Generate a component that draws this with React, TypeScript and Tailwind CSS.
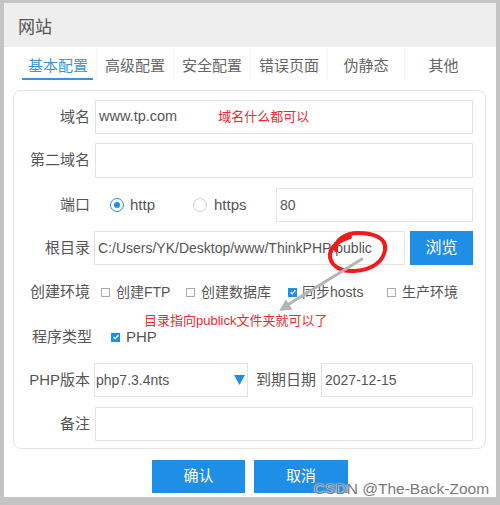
import React from "react";

const tabs = ["基本配置", "高级配置", "安全配置", "错误页面", "伪静态", "其他"];

function Label(props: { text: string; className?: string }) {
  return (
    <div className={["w-[76px] shrink-0 text-right text-[15px] text-[#555]", props.className].filter(Boolean).join(" ")}>
      {props.text}
    </div>
  );
}

function Field(props: { children?: React.ReactNode; className?: string }) {
  return (
    <div
      className={[
        "h-full flex items-center border border-[#e3e3e3] bg-white px-[3px] text-[14px] text-[#555]",
        props.className
      ]
        .filter(Boolean)
        .join(" ")}
    >
      {props.children}
    </div>
  );
}

function Radio(props: { checked?: boolean }) {
  return props.checked ? (
    <span className="flex h-[14px] w-[14px] items-center justify-center rounded-full border border-[#1e8ee6] bg-white">
      <span className="h-[6px] w-[6px] rounded-full bg-[#1e8ee6]" />
    </span>
  ) : (
    <span className="h-[14px] w-[14px] rounded-full border border-[#d0d0d0] bg-white" />
  );
}

function Check(props: { checked?: boolean }) {
  return props.checked ? (
    <span className="flex h-[9px] w-[9px] items-center justify-center bg-[#1e8ee6]">
      <svg viewBox="0 0 10 10" className="h-[8px] w-[8px]" fill="none" stroke="white" strokeWidth="1.8">
        <path d="M2 5.2l2 2 4-4.4" />
      </svg>
    </span>
  ) : (
    <span className="h-[9px] w-[9px] border border-[#aaa] bg-white" />
  );
}

export default function App() {
  return (
    <div className="relative h-[505px] w-[500px] overflow-hidden bg-[#c4c4c4] pl-[4px] pr-[4px] pt-[3px] pb-[8px] font-['Liberation_Sans','Noto_Sans_CJK_SC',sans-serif]">
      <div className="flex h-full flex-col bg-white">
        <div className="flex h-[44px] items-center bg-[#eeeeee] pl-[14px] pt-[5px] text-[17px] text-[#555]">网站</div>

        <div className="flex h-[33px] pl-[16px]">
          {tabs.map((t, i) => (
            <div
              key={t}
              className={[
                "relative flex w-[77px] items-center justify-center pt-[6px] text-[15px]",
                i === 0 ? "text-[#3a95d8]" : "text-[#666]",
                i < tabs.length - 1 ? "border-r border-[#f4f4f4]" : ""
              ].join(" ")}
            >
              {t}
              {i === 0 ? <span className="absolute bottom-0 left-[2px] right-[3px] h-[2px] bg-[#3a95d8]" /> : null}
            </div>
          ))}
        </div>

        <div className="ml-[9px] mr-[10px] mt-[10px] rounded-[8px] border border-[#e3e3e3] pb-[7px] pr-[12px] pt-[9px]">
          <div className="flex h-[34px] items-center gap-[5px]">
            <Label text="域名" />
            <Field className="flex-1">
              <span className="text-[14.5px]">www.tp.com</span>
              <span className="ml-[41px] text-[13px] text-[#ee2a2a]">域名什么都可以</span>
            </Field>
          </div>

          <div className="mt-[9px] flex h-[35px] items-center gap-[5px]">
            <Label text="第二域名" />
            <Field className="flex-1" />
          </div>

          <div className="mt-[10px] flex h-[34px] items-center gap-[5px]">
            <Label text="端口" />
            <div className="flex flex-1 items-center h-full pl-[15px]">
              <div className="flex w-[83px] items-center gap-[6px] text-[15px] text-[#555]">
                <Radio checked />
                http
              </div>
              <div className="flex w-[83px] items-center gap-[7px] text-[15px] text-[#555]">
                <Radio />
                https
              </div>
              <Field className="flex-1">80</Field>
            </div>
          </div>

          <div className="mt-[9px] flex h-[34px] items-center gap-[5px]">
            <Label text="根目录" />
            <Field className="w-[311px] -ml-[1px] whitespace-nowrap overflow-hidden">C:/Users/YK/Desktop/www/ThinkPHP/public</Field>
            <button type="button" className="h-full flex-1 bg-[#1e8ee6] text-[16px] text-white">
              浏览
            </button>
          </div>

          <div className="mt-[10px] flex h-[34px] items-center gap-[5px]">
            <Label text="创建环境" />
            <div className="flex flex-1 items-center pl-[6px] text-[14px] text-[#555]">
              <div className="flex w-[85px] items-center gap-[6px]">
                <Check />
                创建FTP
              </div>
              <div className="flex w-[102px] items-center gap-[6px]">
                <Check />
                创建数据库
              </div>
              <div className="flex w-[99px] items-center gap-[5px]">
                <Check checked />
                同步hosts
              </div>
              <div className="flex items-center gap-[6px]">
                <Check />
                生产环境
              </div>
            </div>
          </div>

          <div className="mt-[11px] flex h-[34px] items-center gap-[5px]">
            <Label text="程序类型" className="w-[78px]" />
            <div className="flex items-center gap-[6px] pl-[14px] text-[15px] text-[#555]">
              <Check checked />
              PHP
            </div>
          </div>

          <div className="mt-[9px] flex h-[34px] items-center">
            <Label text="PHP版本" className="w-[75px]" />
            <Field className="ml-[4px] w-[154px] justify-between pl-[1px] pr-[2px]">
              php7.3.4nts
              <svg viewBox="0 0 10 9" className="h-[10px] w-[11px]">
                <polygon points="0,0 10,0 5,9" fill="#1e8ee6" />
              </svg>
            </Field>
            <div className="ml-[8px] text-[15px] text-[#555]">到期日期</div>
            <Field className="ml-[5px] flex-1">2027-12-15</Field>
          </div>

          <div className="mt-[10px] flex h-[34px] items-center gap-[5px]">
            <Label text="备注" />
            <Field className="flex-1" />
          </div>
        </div>

        <div className="mt-[11px] flex justify-center gap-[9px]">
          <button type="button" className="h-[33px] w-[93px] bg-[#1e8ee6] text-[15px] text-white">
            确认
          </button>
          <button type="button" className="h-[33px] w-[94px] bg-[#1e8ee6] text-[15px] text-white">
            取消
          </button>
        </div>
      </div>

      <div className="absolute left-[144px] top-[311px] text-[13px] text-[#ee2a2a]">目录指向publick文件夹就可以了</div>

      <svg className="pointer-events-none absolute left-0 top-0" width="500" height="505" viewBox="0 0 500 505" fill="none">
        <path
          d="M336 250 C334 240 346 233 358 233 C374 233 387 238 385 250 C383 262 372 270 354 271 C339 272 329 264 330 254 C331 246 340 240 350 237"
          stroke="#f01c1c"
          strokeWidth="4"
          strokeLinecap="round"
        />
        <path d="M362 259 L289 304" stroke="#b4b4b4" strokeWidth="3" strokeLinecap="round" />
        <polygon points="279,311 292.3,309.6 285.9,299.4" fill="#b4b4b4" />
      </svg>

      <div className="absolute left-[314px] top-[477px] text-[15.5px] text-[#7a7a7a] font-['Liberation_Sans',sans-serif] [text-shadow:0_0_2px_#fff,0_0_1px_#fff]">
        CSDN @The-Back-Zoom
      </div>
    </div>
  );
}
